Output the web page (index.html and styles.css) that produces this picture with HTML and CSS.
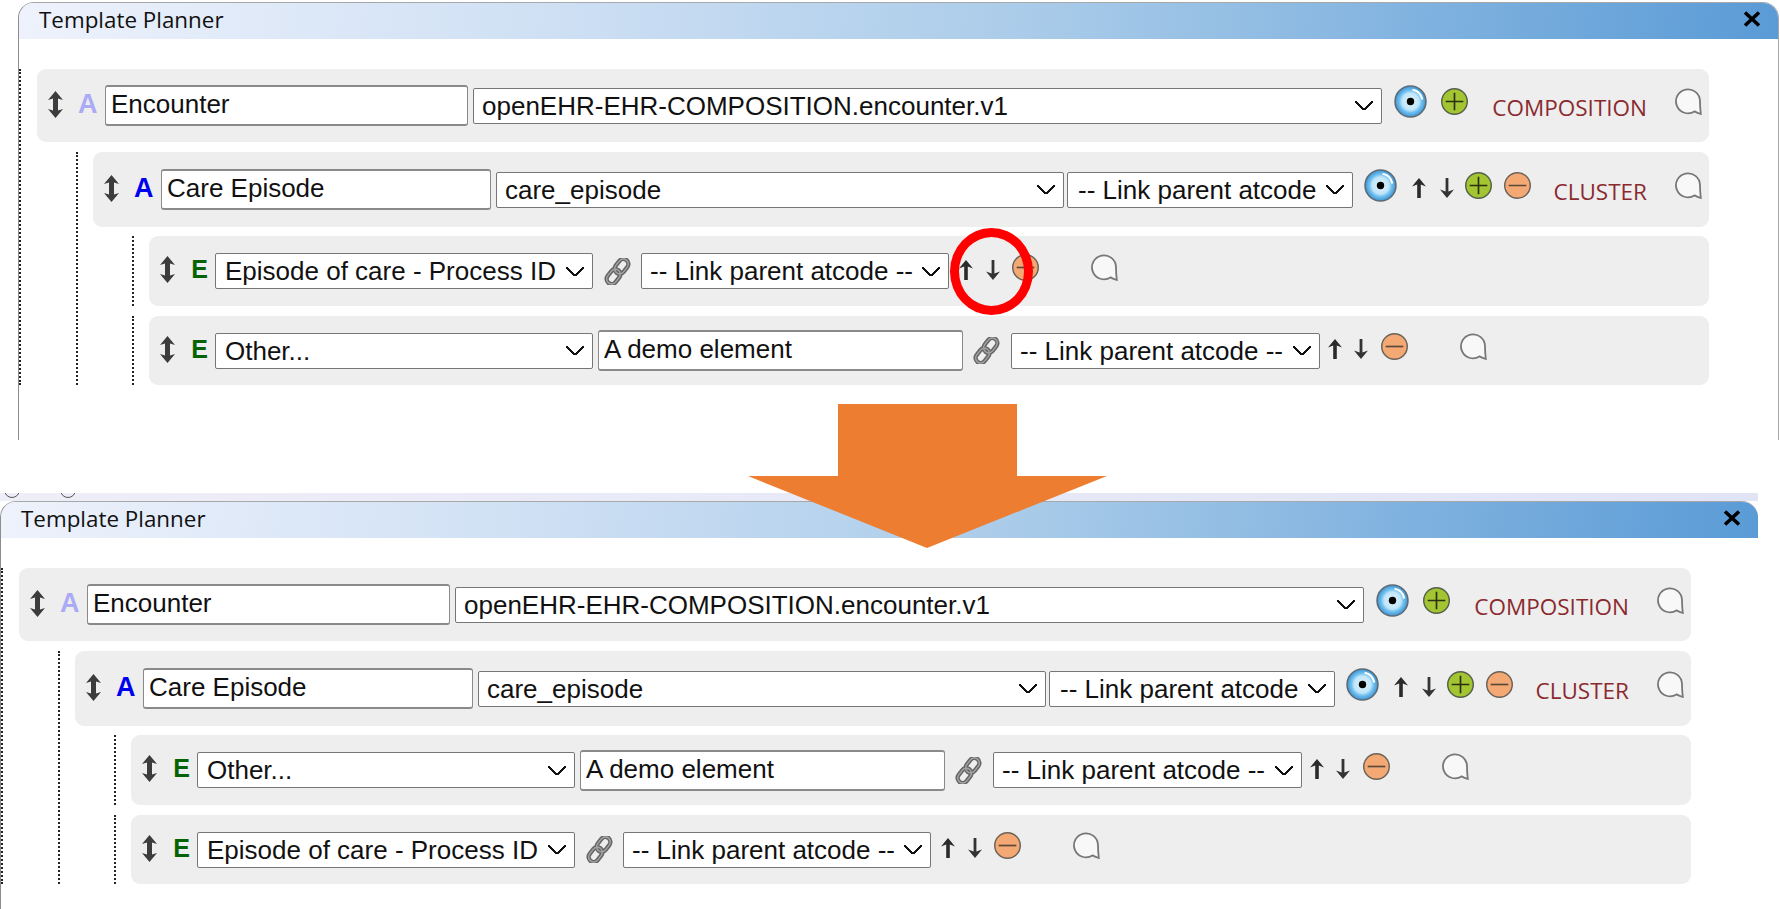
FILE: index.html
```html
<!DOCTYPE html>
<html lang="en">

<head>
  <meta charset="UTF-8" />
  <meta name="viewport" content="width=device-width, initial-scale=1.0" />
  <title>Template Planner</title>

  <link rel="stylesheet" href="styles.css">
</head>

<body>

  <svg class="sprite" width="0" height="0">
    <defs>
      <radialGradient id="eyeFill" cx="50%" cy="50%" r="50%">
        <stop offset="0" stop-color="#e2f4fd" />
        <stop offset="0.55" stop-color="#bfe5f9" />
        <stop offset="0.72" stop-color="#72c0ee" />
        <stop offset="1" stop-color="#3b94d6" />
      </radialGradient>
      <symbol id="i-handle" viewBox="0 0 15 27">
        <path fill="#3c3c3c" d="M7.5 0 L15 9 L10 7.4 V19.6 L15 18 L7.5 27 L0 18 L5 19.6 V7.4 L0 9 Z" />
      </symbol>
      <symbol id="i-eye" viewBox="0 0 32 32">
        <circle cx="16" cy="16" r="15" fill="url(#eyeFill)" stroke="#5f6b73" stroke-width="1.5" />
        <path d="M18 4.5 A12 12 0 0 1 27.5 14" fill="none" stroke="#fff" stroke-width="2" />
        <circle cx="16" cy="16" r="3.6" fill="#000" />
      </symbol>
      <symbol id="i-plus" viewBox="0 0 26 26">
        <circle cx="13" cy="13" r="12.3" fill="#a3c532" stroke="#56604a" stroke-width="1.4" />
        <path d="M13 4.5 V21.5 M4.5 13 H21.5" stroke="#2b3012" stroke-width="1.6" />
      </symbol>
      <symbol id="i-minus" viewBox="0 0 26 26">
        <circle cx="13" cy="13" r="12.3" fill="#f4a873" stroke="#6b6258" stroke-width="1.4" />
        <path d="M4.5 13 H21.5" stroke="#5a4a3c" stroke-width="1.6" />
      </symbol>
      <symbol id="i-bubble" viewBox="0 0 27 27">
        <path fill="#f8f8f8" stroke="#777" stroke-width="1.8" d="M19.5 23.4 A12 12 0 1 1 25 13 C25 17 25.2 21 25.8 26 C23.6 25.4 21.5 24.5 19.5 23.4 Z" />
      </symbol>
      <symbol id="i-up" viewBox="0 0 14 20">
        <path fill="#2a2a2a" d="M7 0 L14 8.5 L8.8 6.6 V20 H5.2 V6.6 L0 8.5 Z" />
      </symbol>
      <symbol id="i-down" viewBox="0 0 14 20">
        <path fill="#333" d="M7 20 L14 11.5 L8.4 13.6 V0 H5.6 V13.6 L0 11.5 Z" />
      </symbol>
      <symbol id="i-link" viewBox="0 0 27 27">
        <g transform="rotate(38 13.5 13.5)" fill="none">
          <g stroke="#666" stroke-width="4.4">
            <rect x="8.5" y="-1" width="10" height="16" rx="5" />
            <rect x="8.5" y="12" width="10" height="16" rx="5" />
          </g>
          <g stroke="#a4a4a4" stroke-width="1.4">
            <rect x="8.5" y="-1" width="10" height="16" rx="5" />
            <rect x="8.5" y="12" width="10" height="16" rx="5" />
          </g>
        </g>
      </symbol>
      <symbol id="i-close" viewBox="0 0 18 16">
        <path d="M2 1.5 L16 14.5 M16 1.5 L2 14.5" stroke="#000" stroke-width="3.6" />
      </symbol>
    </defs>
  </svg>

  <section class="panel panel-before">
    <header class="panel-title">
      <span>Template Planner</span>
      <svg class="close"><use href="#i-close" /></svg>
    </header>
    <div class="tree">
      <div class="row row-composition">
        <svg class="handle"><use href="#i-handle" /></svg>
        <b class="kind kind-off">A</b>
        <input class="field comp-name" type="text" value="Encounter">
        <select class="field comp-archetype"><option>openEHR-EHR-COMPOSITION.encounter.v1</option></select>
        <svg class="eye comp-eye"><use href="#i-eye" /></svg>
        <svg class="round comp-plus"><use href="#i-plus" /></svg>
        <span class="label">COMPOSITION</span>
        <svg class="bubble"><use href="#i-bubble" /></svg>
      </div>
      <div class="branch">
        <div class="row row-cluster">
          <svg class="handle"><use href="#i-handle" /></svg>
          <b class="kind kind-on">A</b>
          <input class="field cl-name" type="text" value="Care Episode">
          <select class="field cl-archetype"><option>care_episode</option></select>
          <select class="field cl-link"><option>-- Link parent atcode --</option></select>
          <svg class="eye cl-eye"><use href="#i-eye" /></svg>
          <svg class="arrow cl-up"><use href="#i-up" /></svg>
          <svg class="arrow cl-down"><use href="#i-down" /></svg>
          <svg class="round cl-plus"><use href="#i-plus" /></svg>
          <svg class="round cl-minus"><use href="#i-minus" /></svg>
          <span class="label">CLUSTER</span>
          <svg class="bubble"><use href="#i-bubble" /></svg>
        </div>
        <div class="leaf">
          <div class="row row-element">
            <svg class="handle"><use href="#i-handle" /></svg>
            <b class="kind kind-element">E</b>
            <select class="field el-type"><option>Episode of care - Process ID</option></select>
            <svg class="chain coded-chain"><use href="#i-link" /></svg>
            <select class="field coded-link"><option>-- Link parent atcode --</option></select>
            <svg class="arrow coded-up"><use href="#i-up" /></svg>
            <svg class="arrow coded-down"><use href="#i-down" /></svg>
            <svg class="round coded-minus"><use href="#i-minus" /></svg>
            <svg class="bubble bubble-near"><use href="#i-bubble" /></svg>
          </div>
        </div>
        <div class="leaf">
          <div class="row row-element">
            <svg class="handle"><use href="#i-handle" /></svg>
            <b class="kind kind-element">E</b>
            <select class="field el-type"><option>Other...</option></select>
            <input class="field other-name" type="text" value="A demo element">
            <svg class="chain other-chain"><use href="#i-link" /></svg>
            <select class="field other-link"><option>-- Link parent atcode --</option></select>
            <svg class="arrow other-up"><use href="#i-up" /></svg>
            <svg class="arrow other-down"><use href="#i-down" /></svg>
            <svg class="round other-minus"><use href="#i-minus" /></svg>
            <svg class="bubble bubble-near"><use href="#i-bubble" /></svg>
          </div>
        </div>
      </div>
    </div>
  </section>

  <div class="strip">
    <span class="strip-dot"></span>
    <span class="strip-dot"></span>
  </div>

  <section class="panel panel-after">
    <header class="panel-title">
      <span>Template Planner</span>
      <svg class="close"><use href="#i-close" /></svg>
    </header>
    <div class="tree">
      <div class="row row-composition">
        <svg class="handle"><use href="#i-handle" /></svg>
        <b class="kind kind-off">A</b>
        <input class="field comp-name" type="text" value="Encounter">
        <select class="field comp-archetype"><option>openEHR-EHR-COMPOSITION.encounter.v1</option></select>
        <svg class="eye comp-eye"><use href="#i-eye" /></svg>
        <svg class="round comp-plus"><use href="#i-plus" /></svg>
        <span class="label">COMPOSITION</span>
        <svg class="bubble"><use href="#i-bubble" /></svg>
      </div>
      <div class="branch">
        <div class="row row-cluster">
          <svg class="handle"><use href="#i-handle" /></svg>
          <b class="kind kind-on">A</b>
          <input class="field cl-name" type="text" value="Care Episode">
          <select class="field cl-archetype"><option>care_episode</option></select>
          <select class="field cl-link"><option>-- Link parent atcode --</option></select>
          <svg class="eye cl-eye"><use href="#i-eye" /></svg>
          <svg class="arrow cl-up"><use href="#i-up" /></svg>
          <svg class="arrow cl-down"><use href="#i-down" /></svg>
          <svg class="round cl-plus"><use href="#i-plus" /></svg>
          <svg class="round cl-minus"><use href="#i-minus" /></svg>
          <span class="label">CLUSTER</span>
          <svg class="bubble"><use href="#i-bubble" /></svg>
        </div>
        <div class="leaf">
          <div class="row row-element">
            <svg class="handle"><use href="#i-handle" /></svg>
            <b class="kind kind-element">E</b>
            <select class="field el-type"><option>Other...</option></select>
            <input class="field other-name" type="text" value="A demo element">
            <svg class="chain other-chain"><use href="#i-link" /></svg>
            <select class="field other-link"><option>-- Link parent atcode --</option></select>
            <svg class="arrow other-up"><use href="#i-up" /></svg>
            <svg class="arrow other-down"><use href="#i-down" /></svg>
            <svg class="round other-minus"><use href="#i-minus" /></svg>
            <svg class="bubble bubble-near"><use href="#i-bubble" /></svg>
          </div>
        </div>
        <div class="leaf">
          <div class="row row-element">
            <svg class="handle"><use href="#i-handle" /></svg>
            <b class="kind kind-element">E</b>
            <select class="field el-type"><option>Episode of care - Process ID</option></select>
            <svg class="chain coded-chain"><use href="#i-link" /></svg>
            <select class="field coded-link"><option>-- Link parent atcode --</option></select>
            <svg class="arrow coded-up"><use href="#i-up" /></svg>
            <svg class="arrow coded-down"><use href="#i-down" /></svg>
            <svg class="round coded-minus"><use href="#i-minus" /></svg>
            <svg class="bubble bubble-near"><use href="#i-bubble" /></svg>
          </div>
        </div>
      </div>
    </div>
  </section>

  <!-- annotations drawn over the two screenshots -->
  <div class="ring"></div>
  <svg class="big-arrow" viewBox="0 0 359 144">
    <polygon fill="#ed7d31" points="90,0 269,0 269,72 359,72 179,144 0,72 90,72" />
  </svg>

</body>

</html>
```

FILE: styles.css
```css
body {
  margin: 0;
  height: 909px;
  overflow: hidden;
  position: relative;
  background: white;
  font-family: "Liberation Sans", Arial, sans-serif;
}

.sprite {
  display: block;
}

.panel {
  box-sizing: border-box;
  background: white;
  overflow: hidden;
  border-top: 1px solid #a8a8a8;
  border-left: 1px solid #8c8c8c;
  border-top-left-radius: 16px;
  border-top-right-radius: 16px;
}

.panel-before {
  margin: 2px 0 0 18px;
  width: 1761px;
  height: 438px;
  border-right: 1px solid #a8a8a8;
}

.panel-after {
  width: 1758px;
  height: 408px;
}

.panel-title {
  display: flex;
  align-items: center;
  justify-content: space-between;
  box-sizing: border-box;
  height: 36px;
  padding: 0 17px 4px 20px;
  background: linear-gradient(96deg, #eef2fc 0%, #cfe0f4 30%, #a9cbe9 58%, #5a9bd6 100%);
  font-family: "Open Sans", sans-serif;
  font-size: 22.4px;
  color: #111;
}

.close {
  width: 18px;
  height: 16px;
}

.tree {
  margin-top: 30px;
  padding-left: 16px;
  border-left: 2px dotted #222;
}

.panel-before .tree {
  margin-right: 69px;
}

.panel-after .tree {
  margin-right: 67px;
}

.row {
  display: flex;
  align-items: center;
  background: #eeeeee;
  border-radius: 9px;
  padding: 0 7px 0 11px;
}

.row-composition {
  height: 73px;
}

.row-cluster {
  height: 75px;
}

.row-element {
  height: 70px;
}

.leaf:last-child .row-element {
  height: 69px;
}

.branch {
  margin: 10px 0 0 39px;
  padding-left: 15px;
  border-left: 2px dotted #222;
}

.leaf {
  margin: 10px 0 0 39px;
  padding-left: 15px;
  border-left: 2px dotted #222;
}

.branch > .leaf:nth-child(2) {
  margin-top: 9px;
}

.handle {
  flex: none;
  width: 15px;
  height: 27px;
  margin-bottom: 3px;
}

.kind {
  flex: none;
  width: 19px;
  margin: 0 0 4px 15px;
  font-size: 27px;
  line-height: 26px;
  text-align: center;
}

.kind-off {
  color: #aaaaf5;
}

.kind-on {
  color: #0000f0;
}

.kind-element {
  width: 17px;
  margin-left: 16px;
  font-size: 25px;
  color: #056305;
}

.field {
  flex: none;
  box-sizing: border-box;
  height: 36px;
  background-color: white;
  color: #111;
  font-family: "Liberation Sans", Arial, sans-serif;
  font-size: 26px;
  border: 1px solid #767676;
  border-radius: 2px;
}

input.field {
  height: 41px;
  padding: 0 5px 2px;
  border-width: 2px 1.5px;
  border-color: #8a8a8a;
  border-radius: 3px;
}

/* own chevron, the stock one is too small at this size */
select.field {
  appearance: none;
  padding: 0 28px 0 8px;
  background-image:
    linear-gradient(45deg, transparent 39%, #111 39%, #111 61%, transparent 61%),
    linear-gradient(-45deg, transparent 39%, #111 39%, #111 61%, transparent 61%);
  background-size: 9px 9px;
  background-position: right 17px center, right 8px center;
  background-repeat: no-repeat;
}

.comp-name {
  width: 363px;
  margin-left: 8px;
}

.comp-archetype {
  width: 909px;
  margin-left: 5px;
}

.comp-eye {
  margin-left: 12px;
}

.comp-plus {
  margin-left: 14px;
}

.cl-name {
  width: 330px;
  margin-left: 8px;
}

.cl-archetype {
  width: 568px;
  margin-left: 5px;
}

/* too narrow for the whole option, the last dashes get cut */
select.cl-link {
  width: 286px;
  margin-left: 3px;
  padding: 0 36px 0 10px;
}

.cl-eye {
  margin-left: 11px;
}

.cl-up {
  margin-left: 15px;
}

.cl-down {
  margin-left: 14px;
}

.cl-plus {
  margin-left: 11px;
}

.cl-minus {
  margin-left: 12px;
}

select.el-type {
  width: 378px;
  margin-left: 7px;
  padding-left: 9px;
}

.coded-chain {
  margin-left: 11px;
}

.coded-link {
  width: 308px;
  margin-left: 10px;
}

.coded-up {
  margin-left: 10px;
}

.coded-down {
  margin-left: 13px;
}

.coded-minus {
  margin-left: 12px;
}

.other-name {
  width: 365px;
  margin-left: 5px;
}

.other-chain {
  margin-left: 10px;
}

.other-link {
  width: 309px;
  margin-left: 11px;
}

.other-up {
  margin-left: 8px;
}

.other-down {
  margin-left: 12px;
}

.other-minus {
  margin-left: 13px;
}

.eye {
  flex: none;
  width: 33px;
  height: 33px;
  margin-bottom: 9px;
}

.round {
  flex: none;
  width: 27px;
  height: 27px;
  margin-bottom: 8px;
}

.arrow {
  flex: none;
  width: 14px;
  height: 20px;
  margin-bottom: 3px;
}

.chain {
  flex: none;
  width: 27px;
  height: 27px;
}

.label {
  margin: 3px 0 0 auto;
  font-family: "Open Sans", sans-serif;
  font-size: 22.5px;
  color: #8b2a2e;
}

.bubble {
  flex: none;
  width: 27px;
  height: 27px;
  margin: 0 0 8px 28px;
}

.bubble-near {
  margin-left: 52px;
}

.strip {
  display: flex;
  gap: 40px;
  box-sizing: border-box;
  width: 1758px;
  height: 8px;
  margin-top: 53px;
  padding-left: 4px;
  overflow: hidden;
  background: linear-gradient(90deg, #eeeef8, #e0e4f5);
}

.strip-dot {
  flex: none;
  width: 14px;
  height: 14px;
  margin-top: -11px;
  border: 1.5px solid #555;
  border-radius: 50%;
}

.ring {
  position: absolute;
  left: 950px;
  top: 228px;
  width: 65px;
  height: 69px;
  border: 9px solid #ff0000;
  border-radius: 50%;
}

.big-arrow {
  position: absolute;
  left: 748px;
  top: 404px;
  width: 359px;
  height: 144px;
}
```
